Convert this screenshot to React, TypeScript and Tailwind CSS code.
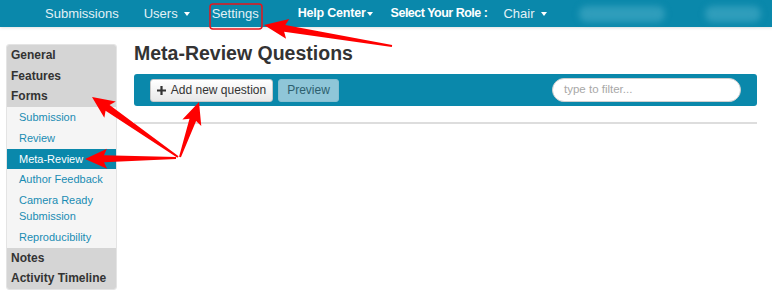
import React from "react";

type P = [number, number];

function arrowPoints(tail: P, tip: P, headLen = 20, headW = 18, neckW = 7, tailW = 1.5) {
  const dx = tip[0] - tail[0];
  const dy = tip[1] - tail[1];
  const L = Math.hypot(dx, dy);
  const ux = dx / L, uy = dy / L;
  const nx = -uy, ny = ux;
  const bx = tip[0] - ux * headLen, by = tip[1] - uy * headLen;
  const pts: P[] = [
    [tail[0] + nx * tailW / 2, tail[1] + ny * tailW / 2],
    [bx + ux * 3 + nx * neckW / 2, by + uy * 3 + ny * neckW / 2],
    [bx + nx * headW / 2, by + ny * headW / 2],
    [tip[0], tip[1]],
    [bx - nx * headW / 2, by - ny * headW / 2],
    [bx + ux * 3 - nx * neckW / 2, by + uy * 3 - ny * neckW / 2],
    [tail[0] - nx * tailW / 2, tail[1] - ny * tailW / 2],
  ];
  return pts.map((p) => p.join(",")).join(" ");
}

const Caret = () => (
  <span className="inline-block ml-[6px] w-0 h-0 border-l-[3.5px] border-r-[3.5px] border-t-[4px] border-l-transparent border-r-transparent border-t-white" />
);

const sidebar: { label: string; kind: "head" | "sub" | "active" }[] = [
  { label: "General", kind: "head" },
  { label: "Features", kind: "head" },
  { label: "Forms", kind: "head" },
  { label: "Submission", kind: "sub" },
  { label: "Review", kind: "sub" },
  { label: "Meta-Review", kind: "active" },
  { label: "Author Feedback", kind: "sub" },
  { label: "Camera Ready Submission", kind: "sub" },
  { label: "Reproducibility", kind: "sub" },
  { label: "Notes", kind: "head" },
  { label: "Activity Timeline", kind: "head" },
];

export default function App() {
  return (
    <div className="relative w-[772px] h-[297px] bg-white overflow-hidden" style={{ fontFamily: '"Liberation Sans", Arial, sans-serif' }}>
      {/* Navbar */}
      <div className="h-[27px] bg-[#0a88ab] shadow-[0_1px_3px_rgba(0,0,0,0.12)] flex items-center text-[13px] text-[#e3f1f6] whitespace-nowrap">
        <span className="ml-[45px] shrink-0">Submissions</span>
        <span className="ml-[25px] shrink-0 flex items-center">Users<Caret /></span>
        <span className="ml-[22px] shrink-0">Settings</span>
        <span className="ml-[39px] shrink-0 font-bold text-white text-[12.5px] tracking-[-0.2px] flex items-center">Help Center<span className="inline-block ml-[1px] w-0 h-0 border-l-[3.5px] border-r-[3.5px] border-t-[4px] border-l-transparent border-r-transparent border-t-white" /></span>
        <span className="ml-[18px] shrink-0 font-bold text-white text-[12.5px] tracking-[-0.5px]">Select Your Role :</span>
        <span className="ml-[16px] shrink-0 flex items-center">Chair<Caret /></span>
        <span className="ml-[32px] shrink-0 w-[86px] h-[16px] rounded-[8px] bg-[#2f9dbb] blur-[3px]" />
        <span className="ml-[40px] shrink-0 w-[56px] h-[16px] rounded-[8px] bg-[#2f9dbb] blur-[3px]" />
      </div>

      <div className="flex pt-[17px]">
        {/* Sidebar */}
        <div className="ml-[6px] w-[111px] rounded-[3px] overflow-hidden border border-[#e4e4e4] self-start">
          {sidebar.map((it) => {
            if (it.kind === "head")
              return (
                <div key={it.label} className="bg-[#d5d5d5] text-[#333] font-bold text-[12px] leading-[20.5px] pl-[4px] whitespace-nowrap">
                  {it.label}
                </div>
              );
            if (it.kind === "active")
              return (
                <div key={it.label} className="bg-[#0a88ab] text-white text-[11px] leading-[20px] pl-[12px]">
                  {it.label}
                </div>
              );
            return (
              <div key={it.label} className="bg-[#f5f5f5] text-[#1a8cb3] text-[11px] leading-[16px] pl-[12px] pr-[10px] py-[2.5px]">
                {it.label}
              </div>
            );
          })}
        </div>

        {/* Main */}
        <div className="ml-[17px] w-[623px]">
          <h1 className="text-[19.5px] font-bold text-[#333] leading-[24px] -mt-[3px] whitespace-nowrap">Meta-Review Questions</h1>
          <div className="mt-[9px] h-[32px] bg-[#0a88ab] rounded-[3px] flex items-center pl-[16px] pr-[16px]">
            <button className="h-[23px] w-[123px] flex items-center justify-center gap-[5px] rounded-[3px] border border-[#c8c8c8] bg-gradient-to-b from-white to-[#e8e8e8] text-[12px] text-[#333] whitespace-nowrap">
              <svg width="9" height="9" viewBox="0 0 9 9"><path d="M3.4 0h2.2v3.4H9v2.2H5.6V9H3.4V5.6H0V3.4h3.4z" fill="#333" /></svg>
              Add new question
            </button>
            <button className="ml-[5px] h-[23px] w-[61px] rounded-[3px] border border-[#86bfd1] bg-[#8fc6d8] text-[12px] text-[#2d5f6e]">
              Preview
            </button>
            <div className="ml-auto w-[189px] h-[24px] rounded-full bg-white border border-[#cfcfcf] flex items-center pl-[11px] text-[11.5px] text-[#a8a8a8] whitespace-nowrap">
              type to filter...
            </div>
          </div>
          <div className="mt-[16px] h-[2px] bg-[#dddddd]" />
        </div>
      </div>

      {/* Annotations */}
      <svg className="absolute inset-0 pointer-events-none" width="772" height="297">
        <rect x="210" y="4" width="52" height="25" rx="3" fill="none" stroke="#e8141b" strokeWidth="1.5" />
        <polygon points={arrowPoints([392, 46], [264, 25], 24, 20, 7, 2)} fill="#ff0000" />
        <polygon points={arrowPoints([178, 157], [92, 97], 22, 20, 7, 2)} fill="#ff0000" />
        <polygon points={arrowPoints([176, 158], [85, 159], 22, 20, 7, 2)} fill="#ff0000" />
        <polygon points={arrowPoints([180, 157], [199, 102], 22, 20, 7, 2)} fill="#ff0000" />
      </svg>
    </div>
  );
}
